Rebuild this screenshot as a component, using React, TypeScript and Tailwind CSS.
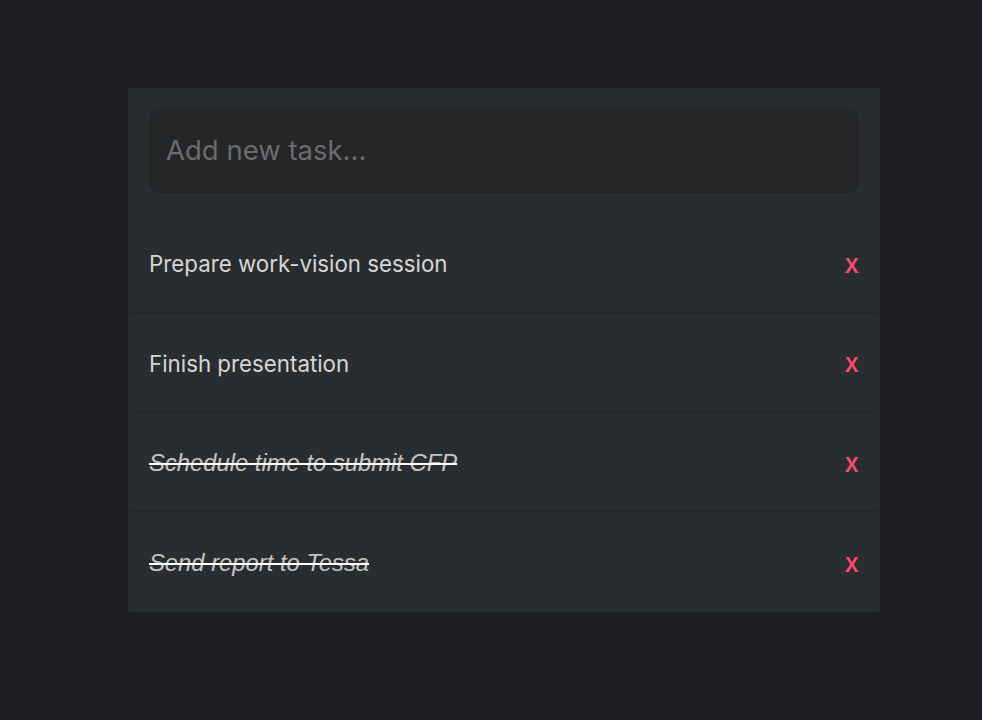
import React from "react";

const tasks = [
  { text: "Prepare work-vision session", done: false },
  { text: "Finish presentation", done: false },
  { text: "Schedule time to submit CFP", done: true },
  { text: "Send report to Tessa", done: true },
];

export default function App() {
  return (
    <div className="min-h-[720px] w-full bg-[#1e1f23] pt-[88px] pl-[128px] flex justify-start" style={{ fontFamily: "Inter, 'Noto Sans', sans-serif" }}>
      <div className="w-[752px] h-[524px] bg-[#2a2d30] border border-[#26282b] flex flex-col">
        <div className="px-5 pt-5 pb-5">
          <div className="h-[84px] rounded-[10px] bg-[#252628] border border-[#232426] flex items-center px-4 text-[27.5px] text-[#6b6c6e]">
            Add new task...
          </div>
        </div>
        {tasks.map((t, i) => (
          <div
            key={i}
            className={`h-[100px] flex items-center justify-between pl-5 pr-[20px] pt-[3px] ${i < tasks.length - 1 ? "border-b border-[#232528]" : ""}`}
          >
            {t.done ? (
              <span
                className="text-[23.8px] italic text-[#c4c4c4] line-through decoration-white decoration-2"
                style={{ fontFamily: "'Liberation Sans', Arial, sans-serif" }}
              >
                {t.text}
              </span>
            ) : (
              <span className="text-[22.3px] text-[#d6d6d6]">{t.text}</span>
            )}
            <span className="text-[26px] font-medium text-[#ff4b6e] leading-none">x</span>
          </div>
        ))}
      </div>
    </div>
  );
}
